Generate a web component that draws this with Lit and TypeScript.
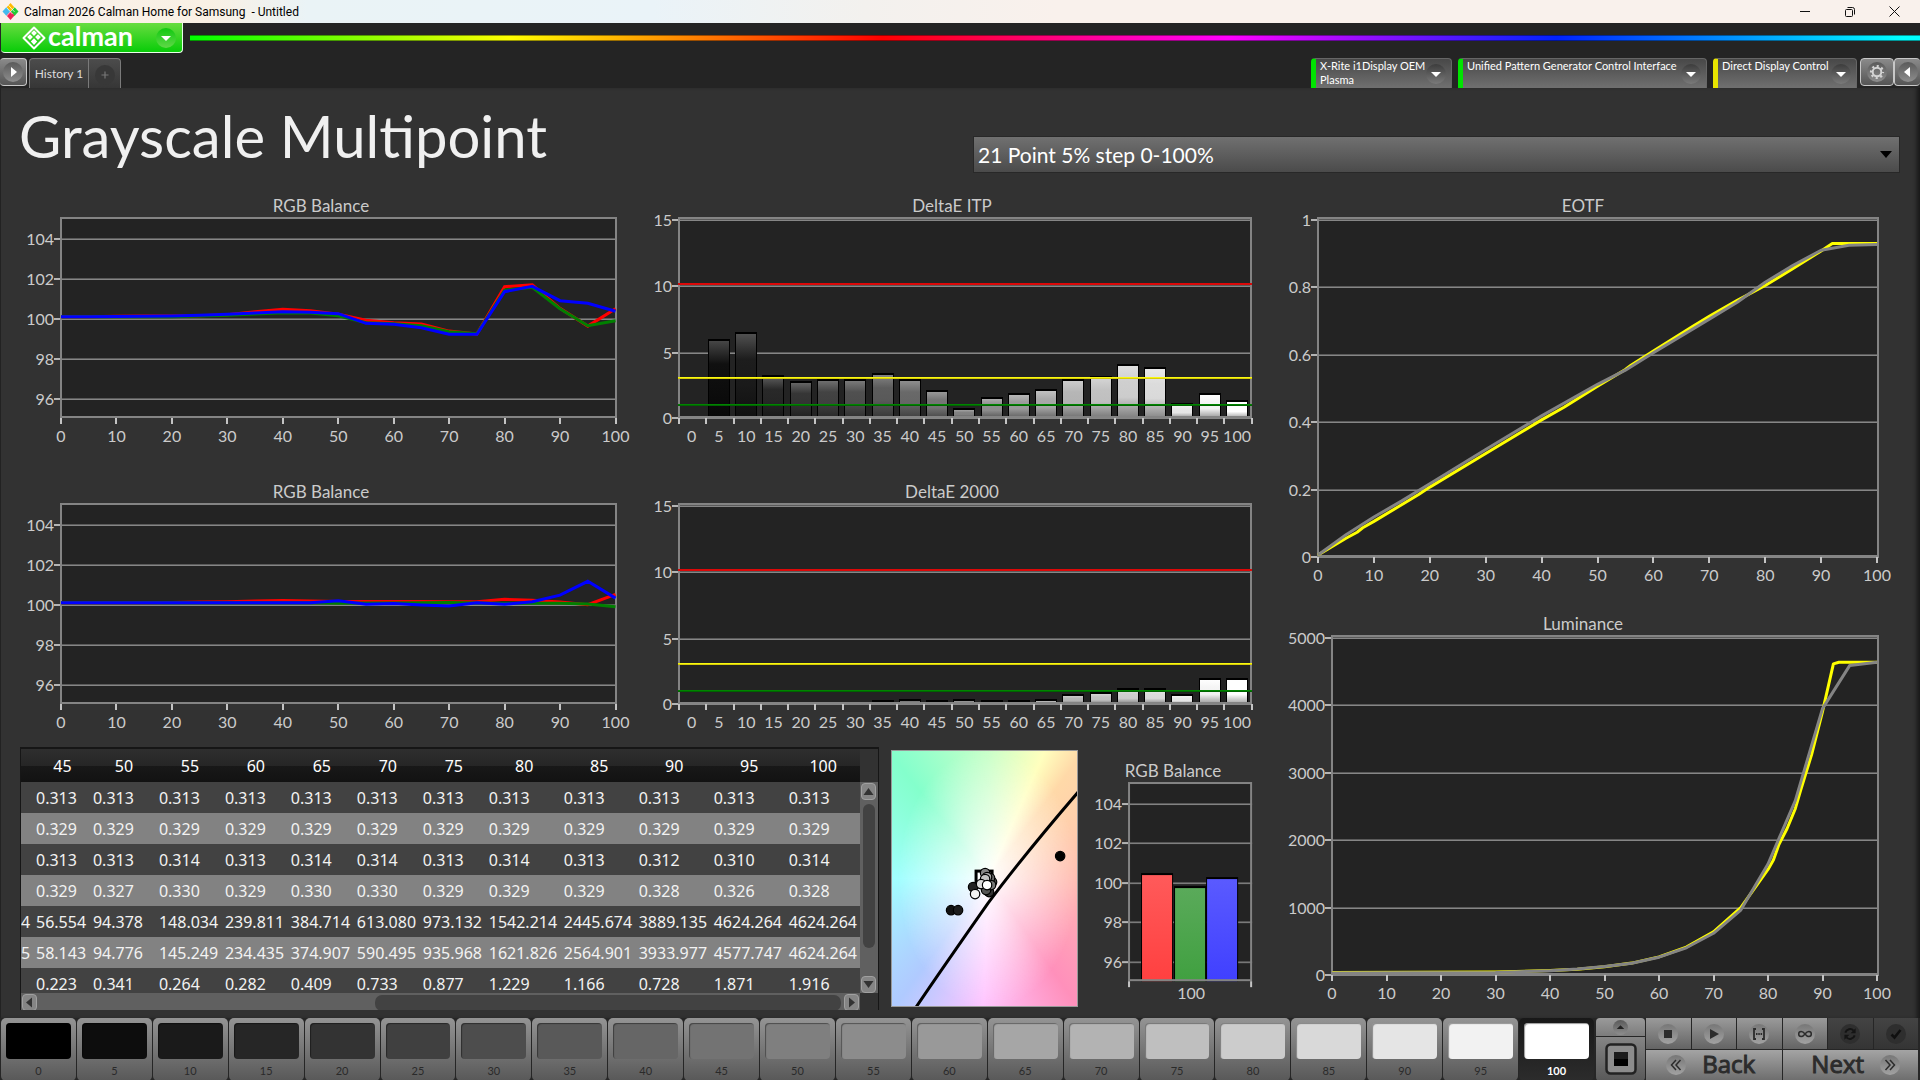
import { LitElement, html, svg, css } from "lit";
import { customElement, state } from "lit/decorators.js";

type Pt = [number, number];
interface Tick { at: number; label: string; }
interface Frame { x: number; y: number; w: number; h: number; }

const STEPS = Array.from({ length: 21 }, (_, i) => i * 5);

const GAMMA_RGB = {
  red: [0, 0, .02, .03, .03, .05, .1, .25, .37, .3, .12, -.18, -.3, -.37, -.72, -.87, 1.5, 1.6, .42, -.47, .4],
  green: [0, 0, 0, 0, 0, .03, .07, .13, .2, .18, .05, -.3, -.35, -.45, -.75, -.85, 1.33, 1.47, .4, -.45, -.2],
  blue: [0, 0, .01, .02, .03, .07, .12, .18, .25, .22, .15, -.33, -.38, -.55, -.88, -.88, 1.25, 1.52, .8, .67, .27],
};
const PLAIN_RGB = {
  red: [0, 0, 0, 0, .01, .03, .05, .08, .11, .08, .06, .06, .06, .06, .05, .05, .17, .12, .03, -.1, .42],
  green: [0, 0, 0, 0, 0, 0, 0, 0, 0, 0, -.03, -.02, -.01, 0, .01, -.01, -.03, -.03, -.03, -.06, -.2],
  blue: [0, 0, 0, 0, 0, 0, 0, 0, 0, 0, .1, -.08, -.04, -.12, -.17, 0, -.08, .05, .38, 1.07, .23],
};
const DELTA_ITP = [0, 5.85, 6.38, 3.15, 2.7, 2.85, 2.85, 3.3, 2.85, 2.03, .73, 1.5, 1.8, 2.1, 2.85, 3.08, 3.98, 3.75, 1.05, 1.8, 1.28];
const DELTA_2000 = [0, 0, 0, 0, 0, 0, .12, .28, .35, .28, .35, .28, .28, .35, .73, .88, 1.18, 1.18, .73, 1.93, 1.93];

const EOTF_TARGET: Pt[] = [[0, 0], [5, .05], [7, .068], [8, .081], [10, .1], [18, .18], [20, .202], [30, .302], [40, .402], [44, .44], [50, .502], [55, .552], [56, .565], [60, .607], [67, .68], [70, .71], [75, .758], [80, .802], [85, .853], [90, .905], [92, .927], [100, .927]];
const EOTF_ACTUAL: Pt[] = [[0, 0], [5, .06], [10, .113], [15, .161], [20, .212], [30, .314], [40, .414], [50, .508], [55, .55], [60, .602], [70, .702], [75, .752], [80, .812], [85, .862], [90, .907], [95, .922], [100, .924]];
const LUM_TARGET: Pt[] = [[0, 8], [30, 16], [40, 36], [45, 56.554], [50, 94.378], [55, 148.034], [60, 239.811], [65, 384.714], [70, 613.08], [75, 973.132], [80, 1542.214], [81, 1680], [82, 1910], [83.5, 2150], [85, 2445.674], [86, 2720], [88, 3250], [90, 3889.135], [92, 4600], [93, 4624.264], [100, 4624.264]];
const LUM_ACTUAL: Pt[] = [[0, 0], [30, 8], [40, 32], [45, 58.143], [50, 94.776], [55, 145.249], [60, 234.435], [65, 374.907], [70, 590.495], [75, 935.968], [80, 1621.826], [85, 2564.901], [90, 3933.977], [95, 4577.747], [100, 4624.264]];

const COLUMNS = ["", "45", "50", "55", "60", "65", "70", "75", "80", "85", "90", "95", "100"];
const ROWS = [
  ["", "0.313", "0.313", "0.313", "0.313", "0.313", "0.313", "0.313", "0.313", "0.313", "0.313", "0.313", "0.313"],
  ["", "0.329", "0.329", "0.329", "0.329", "0.329", "0.329", "0.329", "0.329", "0.329", "0.329", "0.329", "0.329"],
  ["", "0.313", "0.313", "0.314", "0.313", "0.314", "0.314", "0.313", "0.314", "0.313", "0.312", "0.310", "0.314"],
  ["", "0.329", "0.327", "0.330", "0.329", "0.330", "0.330", "0.329", "0.329", "0.329", "0.328", "0.326", "0.328"],
  ["4", "56.554", "94.378", "148.034", "239.811", "384.714", "613.080", "973.132", "1542.214", "2445.674", "3889.135", "4624.264", "4624.264"],
  ["5", "58.143", "94.776", "145.249", "234.435", "374.907", "590.495", "935.968", "1621.826", "2564.901", "3933.977", "4577.747", "4624.264"],
  ["", "0.223", "0.341", "0.264", "0.282", "0.409", "0.733", "0.877", "1.229", "1.166", "0.728", "1.871", "1.916"],
];

const gray = (v: number) => {
  const c = Math.max(0, Math.min(255, Math.round(v)));
  return `rgb(${c},${c},${c})`;
};
const path = (pts: Pt[]) => pts.map(([x, y], i) => `${i ? "L" : "M"}${x.toFixed(1)} ${y.toFixed(1)}`).join("");

/* Plot area with gridlines, tick marks and axis labels. */
function axes(f: Frame, title: string, titleX: number, ys: Tick[], xs: Tick[], marks: number[], body: unknown) {
  const bottom = f.y + f.h;
  return svg`
    <text class="t name" x=${titleX} y=${f.y - 5}>${title}</text>
    <rect x=${f.x} y=${f.y} width=${f.w} height=${f.h} fill="#232323"/>
    ${ys.map(t => svg`
      <rect x=${f.x} y=${t.at - 1} width=${f.w} height="1" fill="#5a5a5a"/>
      <rect x=${f.x} y=${t.at} width=${f.w} height="1" fill="#868686"/>
      <rect x=${f.x - 6} y=${t.at - 1} width="6" height="2" fill="#b4b4b4"/>
      <text class="y" x=${f.x - 6} y=${t.at + 6}>${t.label}</text>`)}
    ${marks.map(x => svg`<rect x=${Math.round(x) - 1} y=${bottom} width="2" height="6" fill="#c4c4c4"/>`)}
    ${xs.map(t => svg`<text class="t" x=${t.at} y=${bottom + 24}>${t.label}</text>`)}
    ${body}`;
}
const border = (f: Frame) => svg`<rect x=${f.x + 1} y=${f.y + 1} width=${f.w - 2} height=${f.h - 2} fill="none" stroke="#848484" stroke-width="2"/>`;

const chartStyles = css`
  :host { display: block; }
  svg { display: block; width: 100%; height: auto; }
  text { font: 16px Lato, "Open Sans", sans-serif; fill: #cbcbcb; }
  .name { font-size: 17px; }
  .t { text-anchor: middle; }
  .y { text-anchor: end; }
`;

@customElement("rgb-line-chart")
class RgbLineChart extends LitElement {
  static properties = { data: { attribute: false } };
  declare data: typeof GAMMA_RGB;
  static styles = chartStyles;
  render() {
    const f = { x: 60, y: 27, w: 557, h: 201 };
    const px = (v: number) => 61 + v * 5.545;
    const ys = [104, 102, 100, 98, 96].map((v, i) => ({ at: 49 + i * 40, label: `${v}` }));
    const xs = STEPS.filter(s => s % 10 === 0).map(s => ({ at: px(s), label: `${s}` }));
    const line = (vals: number[], color: string) => svg`<path fill="none" stroke=${color} stroke-width="3" d=${path(vals.map((v, i) => [px(i * 5), 126.7 - v * 20]))}/>`;
    return html`<svg viewBox="0 0 640 266" role="img" aria-label="RGB Balance">
      ${axes(f, "RGB Balance", 321, ys, xs, xs.map(t => t.at), svg`${border(f)}${line(this.data.red, "#f00")}${line(this.data.green, "#008000")}${line(this.data.blue, "#00f")}`)}
    </svg>`;
  }
}

@customElement("delta-chart")
class DeltaChart extends LitElement {
  static properties = { data: { attribute: false }, name: {} };
  declare data: number[];
  declare name: string;
  static styles = chartStyles;
  render() {
    const f = { x: 38, y: 27, w: 574, h: 201 };
    const slot = 27.27;
    const ys = [[30, "15"], [96, "10"], [163, "5"], [228, "0"]].map(([at, label]) => ({ at: at as number, label: label as string }));
    const xs = STEPS.map((s, i) => ({ at: 38 + slot * (i + .5), label: `${s}` }));
    const marks = Array.from({ length: 22 }, (_, i) => 39 + slot * i);
    const level = (v: number) => 227.3 - v * 13.33;
    const bars = this.data.map((v, i) => {
      if (v <= 0) return "";
      const g = i * 5 * 2.55;
      const x = Math.round(38 + slot * (i + .5) - 11);
      const y = Math.round(level(v));
      const h = 228 - y;
      return svg`
        <linearGradient id=${`g${i}`} x1="0" y1="0" x2="0" y2="1">
          <stop offset="0" stop-color=${gray(g + 60 * (1 - g / 300))}/>
          <stop offset=".3" stop-color=${gray(g + 3)}/>
          <stop offset=".6" stop-color=${gray(g)}/>
          <stop offset="1" stop-color=${gray(g * .62)}/>
        </linearGradient>
        <rect x=${x} y=${y} width="22" height=${h} fill="#000"/>
        <rect x=${x + 1} y=${y + 2} width="20" height=${Math.max(0, h - 2)} fill=${`url(#g${i})`}/>`;
    });
    return html`<svg viewBox="0 0 640 266" role="img" aria-label=${this.name}>
      ${axes(f, this.name, 312, ys, xs, marks, svg`${bars}${border(f)}
        <rect x="38" y="93" width="574" height="2" fill="#dc0808"/>
        <rect x="38" y="187" width="574" height="1" fill="#f8f810"/>
        <rect x="38" y="188" width="574" height="1" fill="#d8cc08"/>
        <rect x="38" y="214" width="574" height="1" fill="#008400"/>
        <rect x="38" y="215" width="574" height="1" fill="#006400"/>`)}
    </svg>`;
  }
}

@customElement("curve-chart")
class CurveChart extends LitElement {
  static properties = { name: {}, left: { type: Number }, labels: { attribute: false }, max: { type: Number }, target: { attribute: false }, actual: { attribute: false } };
  declare name: string;
  declare left: number;
  declare labels: string[];
  declare max: number;
  declare target: Pt[];
  declare actual: Pt[];
  static styles = chartStyles;
  render() {
    const x0 = this.left;
    const f = { x: x0, y: 27, w: 599 - x0, h: 340 };
    const px = (v: number) => x0 + 1 + v * (596 - x0) / 100;
    const py = (v: number) => 365 - v / this.max * 336;
    const n = this.labels.length - 1;
    const ys = this.labels.map((label, i) => ({ at: Math.round(30 + i * 337 / n), label }));
    const xs = STEPS.filter(s => s % 10 === 0).map(s => ({ at: px(s), label: `${s}` }));
    const line = (pts: Pt[], color: string) => svg`<path fill="none" stroke=${color} stroke-width="3" stroke-linejoin="round" d=${path(pts.map(([x, y]) => [px(x), py(y)]))}/>`;
    return html`<svg viewBox="0 0 640 402" role="img" aria-label=${this.name}>
      ${axes(f, this.name, 303, ys, xs, xs.map(t => t.at), svg`${border(f)}${line(this.target, "#ff0")}${line(this.actual, "#848484")}`)}
    </svg>`;
  }
}

@customElement("rgb-bars")
class RgbBars extends LitElement {
  static styles = chartStyles;
  render() {
    const f = { x: 38, y: 32, w: 124, h: 199 };
    const ys = [[54, "104"], [93, "102"], [133, "100"], [172, "98"], [212, "96"]].map(([at, label]) => ({ at: at as number, label: label as string }));
    const bars: [number, number, string, string][] = [[51, 123, "#ff5a5a", "#ff4040"], [84, 136, "#5aaa5a", "#40a040"], [116, 127, "#5a5aff", "#4040ff"]];
    return html`<svg viewBox="0 0 190 257" role="img" aria-label="RGB Balance at 100">
      ${axes(f, "RGB Balance", 83, ys, [], [39, 161], svg`
        ${bars.map(([x, y, a, b], i) => svg`
          <linearGradient id=${`b${i}`} x1="0" y1="0" x2="0" y2="1"><stop offset="0" stop-color=${a}/><stop offset="1" stop-color=${b}/></linearGradient>
          <rect x=${x} y=${y} width="32" height=${231 - y} fill="#000"/>
          <rect x=${x + 1} y=${y + 2} width="30" height=${229 - y} fill=${`url(#b${i})`}/>`)}
        ${border(f)}
        <text class="t" x="101" y="249">100</text>`)}
    </svg>`;
  }
}

@customElement("chroma-chart")
class ChromaChart extends LitElement {
  static styles = css`
    :host { display: block; }
    .plane {
      background:
        radial-gradient(ellipse 90px 130px at 52% 50%, #fff 0%, #fffc 20%, #fff0 100%),
        conic-gradient(from 0deg at 52% 50%, #c8ffc8 0deg, #ffffbe 24deg, #ffd9a8 37deg, #ffbdb2 90deg, #ff90bb 145deg, #ffc4ff 182deg, #b0caff 216deg, #a2ffff 270deg, #84ffcc 322deg, #c8ffc8 360deg);
      border: 1px solid #999;
      box-sizing: border-box;
    }
    svg { display: block; width: 100%; height: auto; }
  `;
  render() {
    const dots: [number, number, string][] = [
      [169, 106, "#000"], [60, 160, "#111"], [67, 160, "#1c1c1c"], [82, 137, "#222"], [98, 142, "#333"], [101, 132, "#444"],
      [95, 140, "#555"], [99, 128, "#666"], [100, 135, "#777"], [94, 123, "#888"], [96, 127, "#aaa"], [94, 129, "#c4c4c4"],
      [90, 134, "#dcdcdc"], [96, 135, "#fff"], [84, 144, "#f2f2f2"],
    ];
    return html`<div class="plane"><svg viewBox="1 1 185 255" role="img" aria-label="Chromaticity">
      <path d="M25 257Q50 220 97 153Q132 106 187 42" fill="none" stroke="#000" stroke-width="3"/>
      <rect x="85" y="121" width="16" height="16" fill="#fff" stroke="#000" stroke-width="3"/>
      ${dots.map(([x, y, c]) => svg`<circle cx=${x} cy=${y} r="4.7" fill=${c} stroke="#000" stroke-width="1.2"/>`)}
    </svg></div>`;
  }
}

const glyph = {
  down: svg`<path d="M5 8h10l-5 5z" fill="#fff"/>`,
  play: svg`<path d="M8 5l6 5-6 5z" fill="#fff"/>`,
  back: svg`<path d="M12 5l-6 5 6 5z" fill="#fff"/>`,
  plus: svg`<path d="M10 6.500v7M6.500 10h7" stroke="#777" stroke-width="1.200"/>`,
  gear: svg`<circle cx="10" cy="10" r="4.300" fill="none" stroke="#d4d4d4" stroke-width="2"/><circle cx="10" cy="10" r="6" fill="none" stroke="#d4d4d4" stroke-width="2.200" stroke-dasharray="2.100 2.612" stroke-dashoffset="1"/>`,
  up: svg`<path d="M10 7l5 5H5z" fill="#222"/>`,
  stop: svg`<path d="M6 6h8v8H6z" fill="#2c2c2c"/>`,
  run: svg`<path d="M6 5l9 5-9 5z" fill="#2c2c2c"/>`,
  range: svg`<path d="M7 5H5v10h2M13 5h2v10h-2" fill="none" stroke="#2c2c2c" stroke-width="1.800"/><path d="M7 9h1.500v2H7zM9.300 9h1.500v2H9.300zM11.600 9h1.500v2h-1.500z" fill="#2c2c2c"/>`,
  loop: svg`<path d="M10 10C8.500 8 7.500 7.500 6.200 7.500a2.500 2.500 0 0 0 0 5C7.500 12.500 8.500 12 10 10s2.500-2.500 3.800-2.500a2.500 2.500 0 0 1 0 5C12.500 12.500 11.500 12 10 10z" fill="none" stroke="#2c2c2c" stroke-width="1.500"/>`,
  sync: svg`<path d="M5.300 8.600A5 5 0 0 1 13.600 6.600M14.700 11.400A5 5 0 0 1 6.400 13.400" fill="none" stroke="#141414" stroke-width="2"/><path d="M15.600 4.200v5h-5zM4.400 15.800v-5h5z" fill="#141414"/>`,
  check: svg`<path d="M5.500 10.500l3 3 6-7.500" fill="none" stroke="#101010" stroke-width="2.600"/>`,
  prev: svg`<path d="M10 5l-4.500 5 4.500 5M14.500 5L10 10l4.500 5" fill="none" stroke="#2c2c2c" stroke-width="1.500"/>`,
  next: svg`<path d="M5.500 5l4.500 5-4.500 5M10 5l4.500 5-4.500 5" fill="none" stroke="#2c2c2c" stroke-width="1.500"/>`,
};
const knob = (name: keyof typeof glyph, tone = "") => html`<svg class="knob ${tone}" viewBox="0 0 20 20" aria-hidden="true">${glyph[name]}</svg>`;

@customElement("app-root")
class AppRoot extends LitElement {
  @state() private selected = 100;

  static styles = css`
    :host {
      display: flex; flex-direction: column; min-height: 100vh;
      background: #323232; color: #eee; font: 16px Lato, "Open Sans", sans-serif;
    }
    button, select { font: inherit; color: inherit; margin: 0; padding: 0; border: 0; background: none; }
    .knob { width: 20px; height: 20px; flex: none; border-radius: 50%; display: block; background: linear-gradient(#3c3c3c, #7a7a7a); }
    .knob.green { background: linear-gradient(#10c810, #60d848); }
    .knob.dim { background: #383838; }
    .knob.gray { background: linear-gradient(#5a5a5a, #8e8e8e); }
    .knob.pale { background: linear-gradient(#777, #a2a2a2); }
    .knob.off { background: #2e2e2e; }

    .titlebar {
      display: flex; align-items: center; height: 23px; padding: 0 3px 0 2px; gap: 5px; color: #000;
      font: 12px Roboto, "Open Sans", sans-serif; white-space: pre;
      background: linear-gradient(90deg, #faf2ec 0, #f9f0e4 11%, #eaf3f6 16%, #eaf3f8 34%, #f3f1ee 45%, #f9f1ec 55%);
    }
    .appicon { width: 17px; height: 17px; }
    .caption { flex: 1; }
    .win { display: flex; align-items: center; height: 100%; }
    .win button { width: 45px; display: grid; place-items: center; }

    .brandrow { display: flex; align-items: flex-start; gap: 7px; height: 35px; background: #242424; }
    .brand {
      display: flex; align-items: center; width: 182px; height: 30px; margin-left: 1px; padding: 0 6px 0 21px; box-sizing: border-box;
      border: 1px solid #e8ffe8; border-top: 0; border-left-width: 0; border-radius: 0 0 4px 4px;
      background: linear-gradient(#68dc40, #08cc08); color: #fff;
    }
    .brand .mark { width: 24px; height: 24px; }
    .brand .word { flex: 1; text-align: left; padding-left: 2px; font-size: 27px; font-weight: 700; line-height: 26px; height: 30px; }
    .rainbow {
      flex: 1; height: 4px; margin-top: 12px; border: solid #0006; border-width: 1px 0;
      background: linear-gradient(90deg, #0f0 0, #ff0 18.5%, #f00 40%, #f0f 60%, #02f 79%, #0ff 99%) border-box;
    }

    .tabs { display: flex; align-items: flex-start; height: 30px; background: #242424; }
    .square {
      height: 28px; width: 34px; display: grid; place-items: center; box-sizing: border-box;
      border: 1px solid #c8c8c8; border-radius: 4px; background: linear-gradient(#8a8a8a, #555);
    }
    .square.first { width: 27px; border-left: 0; }
    .square.last { width: 26px; border-right: 0; }
    .history { display: flex; height: 30px; margin-left: 2px; border: 1px solid #7a7a7a; border-bottom: 0; border-radius: 4px 4px 0 0; box-sizing: border-box; background: linear-gradient(#4c4c4c, #363636); }
    .history button { font-size: 12px; color: #ddd; width: 58px; }
    .history button + button { width: 32px; border-left: 1px solid #7a7a7a; display: grid; place-items: center; padding-top: 2px; }
    .spring { flex: 1; }
    .device {
      display: flex; height: 30px; box-sizing: border-box; padding: 0 5px 0 4px; margin-right: 6px; text-align: left;
      border: solid #666; border-width: 1px 1px 0 0; border-left: 5px solid #00e400; border-radius: 4px 4px 0 0;
      background: linear-gradient(#484848, #707070); font-size: 11px; line-height: 14px; color: #fff;
    }
    .device.yellow { border-left-color: #e8e400; margin-right: 3px; }
    .device .label { flex: 1; white-space: pre-line; }
    .device .knob { margin-top: 5px; }
    .d1 { width: 141px; } .d2 { width: 249px; } .d3 { width: 144px; }

    main { flex: 1; box-shadow: inset 1px 0 #222, inset -5px 0 4px -2px #181818; }
    .head { display: grid; grid-template-columns: 973fr 927fr 20fr; height: 102px; align-items: start; }
    h1 { margin: 0; padding: 13px 0 0 19px; font-weight: 400; font-size: 58px; line-height: 70px; color: #f0f0f0; }
    .picker {
      appearance: none; width: 100%; height: 37px; margin-top: 48px; padding: 0 4px; font-size: 21px; color: #fff; border: 1px solid #282828; border-radius: 0;
      background: linear-gradient(#707070, #4b4b4b);
    }
    .pickwrap { display: grid; align-items: center; }
    .pickwrap > * { grid-area: 1 / 1; }
    .caret { width: 12px; height: 7px; justify-self: end; margin: 48px 8px 0 0; pointer-events: none; }
    .board { display: grid; grid-template-columns: 2fr 1fr; align-items: start; }
    .charts { display: grid; grid-template-columns: 1fr 1fr; row-gap: 20px; }
    .curves { display: grid; row-gap: 16px; }
    .lower { display: grid; grid-template-columns: 858fr 187fr 190fr; column-gap: 12px; padding: 5px 0 0 20px; }
    chroma-chart, rgb-bars { margin-top: 3px; }

    .grid { display: grid; grid-template-columns: 1fr 18px; grid-template-rows: 244px 19px; border: solid #161616; border-width: 2px 1px 0 1px; box-sizing: border-box; height: 263px; overflow: hidden; }
    .clip { overflow: hidden; min-width: 0; }
    table { width: 100%; border-collapse: collapse; table-layout: fixed; white-space: nowrap; font: 16px "Noto Sans", "Open Sans", sans-serif; line-height: 20px; }
    th { height: 33px; padding: 0; font-weight: 400; text-align: center; background: linear-gradient(#2e2e2e, #262626 50%, #181818 52%, #121212); color: #fff; }
    td { height: 31px; padding: 0 0 0 2px; background: #424242; color: #f2f2f2; }
    td:first-child { padding: 0; }
    tr:nth-child(even) td { background: #828282; }
    .vbar { display: flex; flex-direction: column; align-items: center; margin-top: 33px; background: #606060; padding: 1px 1px 0; gap: 4px; }
    .hbar { display: flex; align-items: center; background: #606060; padding: 0 1px; gap: 3px; }
    .arrow { display: grid; place-items: center; flex: none; width: 15px; height: 17px; box-sizing: border-box; border: 1px solid #a0a0a0; border-radius: 4px; background: #858585; }
    .vbar .thumb { width: 12px; flex: 141; border-radius: 6px; background: #424242; }
    .vbar .rest { flex: 20; }
    .hbar .rest { flex: 334; }
    .hbar .thumb { height: 16px; flex: 469; border-radius: 7px; background: #424242; }

    footer { display: grid; grid-template-columns: 1596fr 49fr 275fr; height: 62px; background: #262626; }
    .patches { display: grid; grid-template-columns: repeat(21, 1fr); padding: 0 1px; }
    .patch {
      display: flex; flex-direction: column; align-items: stretch; padding: 5px 5px 0; margin: 0 1px 1px 0; gap: 2px;
      border-radius: 5px; background: linear-gradient(#949494, #585858); color: #2a2a2a; font-size: 11px; line-height: 20px; text-align: center;
    }
    .patch .chip { height: 36px; border-radius: 4px; box-shadow: inset 1px 1px 1px #0006; }
    .patch.on { background: linear-gradient(#181818, #2c2c2c); color: #fff; font-weight: 700; }
    .stopbox { display: grid; grid-template-rows: 18px 1fr; row-gap: 1px; margin-bottom: 1px; }
    .stopbox button { display: grid; place-items: center; background: linear-gradient(#9a9a9a, #7c7c7c); border-radius: 4px 4px 0 0; }
    .stopbox button + button { background: linear-gradient(#858585, #585858); border-radius: 0 0 4px 4px; }
    .stopbox .knob { width: 15px; height: 15px; }
    .transport { display: grid; grid-template-columns: repeat(6, 1fr); grid-template-rows: 1fr 1fr; gap: 1px; padding: 0 2px 0 1px; margin-bottom: 1px; }
    .transport button { display: flex; align-items: center; justify-content: center; background: linear-gradient(#9a9a9a, #646464); }
    .transport button:disabled { background: linear-gradient(#444, #343434); }
    .transport .nav { grid-column: span 3; gap: 16px; padding: 0 6px 1px 0; font: 24px "Open Sans", sans-serif; line-height: 26px; color: #2c2c2c; -webkit-text-stroke: 1px #2c2c2c; background: linear-gradient(#a4a4a4, #6c6c6c); }
    .transport .nav.next { justify-content: flex-end; padding-right: 18px; }
    .nav span { margin-bottom: 3px; }
  `;

  private patch(step: number) {
    const on = step === this.selected;
    return html`<button class="patch ${on ? "on" : ""}" aria-pressed=${on} @click=${() => (this.selected = step)}>
      <span class="chip" style="background:${gray(step * 2.55)}"></span>${step}
    </button>`;
  }

  private arrow(d: string, label: string) {
    return html`<button class="arrow" aria-label=${label}><svg width="11" height="11" viewBox="0 0 11 11"><path d=${d} fill="#333"/></svg></button>`;
  }

  render() {
    const widths = [13, 57, 66, 66, 66, 66, 66, 66, 75, 75, 75, 75, 73];
    return html`
      <div class="titlebar">
        <svg class="appicon" viewBox="0 0 17 17" aria-hidden="true">
          <path d="M8.500 0l4 4.500-4 4.500-4-4.500z" fill="#fb0"/><path d="M12.500 4l4 4.500-4 4.500-4-4.500z" fill="#2c3"/>
          <path d="M4.500 4l4 4.500-4 4.500-4-4.500z" fill="#4be"/><path d="M8.500 8l4 4.500-4 4.500-4-4.500z" fill="#e25"/>
          <path d="M6.500 2.300l6 6.600M4.500 4.500l6 6.600M12.500 4.300l-8 8.800" stroke="#fff" stroke-width=".7" fill="none"/>
        </svg>
        <span class="caption">Calman 2026 Calman Home for Samsung  - Untitled</span>
        <div class="win">
          <button aria-label="Minimize"><svg width="10" height="10" viewBox="0 0 10 10"><path d="M0 4.500h10" stroke="#111"/></svg></button>
          <button aria-label="Restore"><svg width="10" height="10" viewBox="0 0 10 10" fill="none" stroke="#111"><rect x=".5" y="2.500" width="7" height="7" rx="1"/><path d="M2.500 .5h5a2 2 0 0 1 2 2v5"/></svg></button>
          <button aria-label="Close"><svg width="11" height="11" viewBox="0 0 11 11"><path d="M.5.5l10 10M10.500.5l-10 10" stroke="#111"/></svg></button>
        </div>
      </div>

      <div class="brandrow">
        <button class="brand" aria-label="calman menu">
          <svg class="mark" viewBox="0 0 24 24" aria-hidden="true">
            <path d="M12 1.500L22.500 12 12 22.500 1.500 12z" fill="none" stroke="#fff" stroke-width="2" stroke-linejoin="round"/>
            <path d="M12 4.200l2.900 2.900-2.900 2.900-2.900-2.900zM8 8.200l2.900 2.900L8 14l-2.900-2.900zM16 8.200l2.900 2.900L16 14l-2.900-2.900zM12 12.200l3.200 3.200-3.200 3.600-3.200-3.600z" fill="#fff"/>
          </svg>
          <span class="word">calman</span>${knob("down", "green")}
        </button>
        <div class="rainbow"></div>
      </div>

      <nav class="tabs">
        <button class="square first" aria-label="Expand">${knob("play", "gray")}</button>
        <div class="history"><button>History 1</button><button aria-label="Add history">${knob("plus", "dim")}</button></div>
        <div class="spring"></div>
        <button class="device d1"><span class="label">X-Rite i1Display OEM
Plasma</span>${knob("down")}</button>
        <button class="device d2"><span class="label">Unified Pattern Generator Control Interface</span>${knob("down")}</button>
        <button class="device yellow d3"><span class="label">Direct Display Control</span>${knob("down")}</button>
        <button class="square" aria-label="Settings">${knob("gear", "gray")}</button>
        <button class="square last" aria-label="Collapse">${knob("back", "gray")}</button>
      </nav>

      <main>
        <div class="head">
          <h1>Grayscale Multipoint</h1>
          <div class="pickwrap">
            <select class="picker" aria-label="Point series"><option>21 Point 5% step 0-100%</option></select>
            <svg class="caret" viewBox="0 0 12 7" aria-hidden="true"><path d="M0 0h12L6 7z"/></svg>
          </div>
        </div>
        <div class="board">
          <div>
            <div class="charts">
              <rgb-line-chart .data=${GAMMA_RGB}></rgb-line-chart>
              <delta-chart name="DeltaE ITP" .data=${DELTA_ITP}></delta-chart>
              <rgb-line-chart .data=${PLAIN_RGB}></rgb-line-chart>
              <delta-chart name="DeltaE 2000" .data=${DELTA_2000}></delta-chart>
            </div>
            <div class="lower">
              <div class="grid">
                <div class="clip">
                  <table>
                    <colgroup>${widths.map(w => html`<col style="width:${w / 8.39}%">`)}</colgroup>
                    <thead><tr>${COLUMNS.map(c => html`<th scope="col">${c}</th>`)}</tr></thead>
                    <tbody>${ROWS.map(r => html`<tr>${r.map(c => html`<td>${c}</td>`)}</tr>`)}</tbody>
                  </table>
                </div>
                <div class="vbar">
                  ${this.arrow("M5.500 2l5 7H.5z", "Scroll up")}<div class="thumb"></div><div class="rest"></div>${this.arrow("M5.500 9l5-7H.5z", "Scroll down")}
                </div>
                <div class="hbar">
                  ${this.arrow("M2 5.500l6-5v10z", "Scroll left")}<div class="rest"></div><div class="thumb"></div>${this.arrow("M9 5.500l-6-5v10z", "Scroll right")}
                </div>
              </div>
              <chroma-chart></chroma-chart>
              <rgb-bars></rgb-bars>
            </div>
          </div>
          <div class="curves">
            <curve-chart name="EOTF" left="37" max="1" .labels=${["1", "0.8", "0.6", "0.4", "0.2", "0"]} .target=${EOTF_TARGET} .actual=${EOTF_ACTUAL}></curve-chart>
            <curve-chart name="Luminance" left="51" max="5000" .labels=${["5000", "4000", "3000", "2000", "1000", "0"]} .target=${LUM_TARGET} .actual=${LUM_ACTUAL}></curve-chart>
          </div>
        </div>
      </main>

      <footer>
        <div class="patches">${STEPS.map(s => this.patch(s))}</div>
        <div class="stopbox">
          <button aria-label="More">${knob("up", "gray")}</button>
          <button aria-label="Pattern window"><svg width="32" height="32" viewBox="0 0 32 32"><rect x="1.500" y="1.500" width="29" height="29" rx="4" fill="#8c8c8c" stroke="#222" stroke-width="2.500"/><path d="M9 9h14v14H9z" fill="#000"/><path d="M9 9h14v7H9z" fill="#1c1c1c"/></svg></button>
        </div>
        <div class="transport">
          <button aria-label="Stop">${knob("stop", "pale")}</button>
          <button aria-label="Read">${knob("run", "pale")}</button>
          <button aria-label="Read series">${knob("range", "pale")}</button>
          <button aria-label="Read continuous">${knob("loop", "pale")}</button>
          <button aria-label="Refresh" disabled>${knob("sync", "off")}</button>
          <button aria-label="Accept" disabled>${knob("check", "off")}</button>
          <button class="nav">${knob("prev", "pale")}<span>Back</span></button>
          <button class="nav next"><span>Next</span>${knob("next", "pale")}</button>
        </div>
      </footer>`;
  }
}
